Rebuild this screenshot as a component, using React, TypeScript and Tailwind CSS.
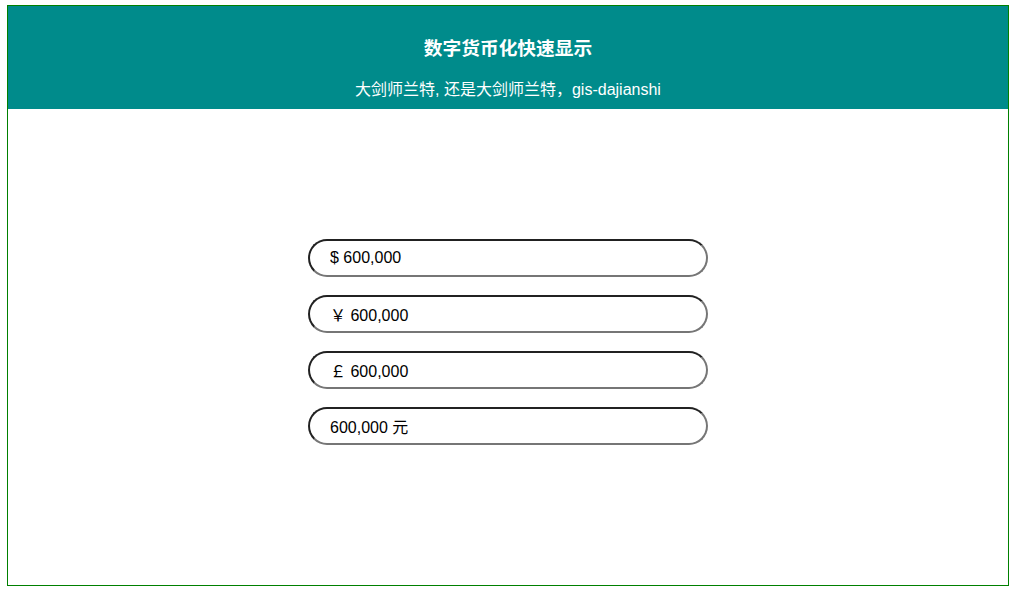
const values = ['$ 600,000', '￥ 600,000', '￡ 600,000', '600,000 元']

export default function App() {
  return (
    <div className="pl-[7px] pt-[5px] font-['Liberation_Sans','Noto_Sans_CJK_SC',sans-serif]">
      <div className="w-[1002px] h-[581px] border border-[#008000] flex flex-col">
        <header className="h-[103px] bg-[#008b8b] text-white flex flex-col items-center pt-[31px]">
          <h3 className="text-[18.72px] leading-[24px] font-bold">数字货币化快速显示</h3>
          <p className="mt-[17px] text-base leading-6">大剑师兰特, 还是大剑师兰特，gis-dajianshi</p>
        </header>
        <main className="flex-1 flex flex-col items-center gap-[18px] pt-[130px]">
          {values.map((v) => (
            <input
              key={v}
              readOnly
              value={v}
              className="w-[400px] h-[38px] rounded-full border-2 [border-style:inset] border-[#767676] px-5 text-base text-black outline-none bg-white"
            />
          ))}
        </main>
      </div>
    </div>
  )
}
